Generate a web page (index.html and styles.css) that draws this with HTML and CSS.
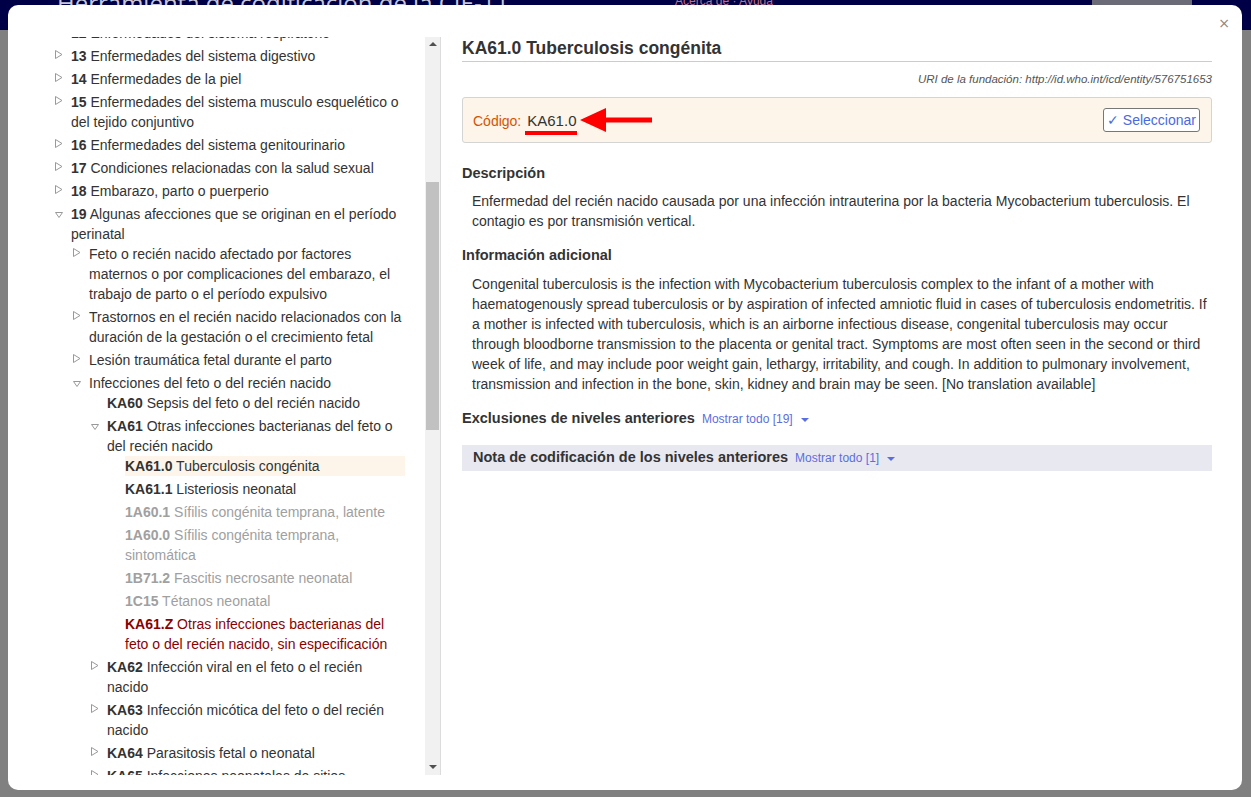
FILE: index.html
```html
<!DOCTYPE html>
<html lang="es">
<head>
<meta charset="utf-8">
<title>Herramienta de codificación de la CIE-11</title>
<link rel="stylesheet" href="styles.css">
</head>
<body>
<header class="topbar">
  <h1 class="app-title">Herramienta de codificación de la CIE-11</h1>
  <span class="top-links">Acerca de · Ayuda</span>
  <span class="top-btn"></span>
</header>

<div class="modal">
  <button class="close" type="button">×</button>
  <div class="modal-body">
    <div class="tree-pane">
      <div class="tree-viewport">
        <ul class="tree">
          <li class="node"><span class="tw"><svg width="8" height="9" viewBox="0 0 8 9"><polygon points="0.5,0.5 7,4.5 0.5,8.5"/></svg></span><div class="nc"><div class="lbl"><b>12</b> Enfermedades del sistema respiratorio</div></div></li>
          <li class="node"><span class="tw"><svg width="8" height="9" viewBox="0 0 8 9"><polygon points="0.5,0.5 7,4.5 0.5,8.5"/></svg></span><div class="nc"><div class="lbl"><b>13</b> Enfermedades del sistema digestivo</div></div></li>
          <li class="node"><span class="tw"><svg width="8" height="9" viewBox="0 0 8 9"><polygon points="0.5,0.5 7,4.5 0.5,8.5"/></svg></span><div class="nc"><div class="lbl"><b>14</b> Enfermedades de la piel</div></div></li>
          <li class="node"><span class="tw"><svg width="8" height="9" viewBox="0 0 8 9"><polygon points="0.5,0.5 7,4.5 0.5,8.5"/></svg></span><div class="nc"><div class="lbl"><b>15</b> Enfermedades del sistema musculo esquelético o del tejido conjuntivo</div></div></li>
          <li class="node"><span class="tw"><svg width="8" height="9" viewBox="0 0 8 9"><polygon points="0.5,0.5 7,4.5 0.5,8.5"/></svg></span><div class="nc"><div class="lbl"><b>16</b> Enfermedades del sistema genitourinario</div></div></li>
          <li class="node"><span class="tw"><svg width="8" height="9" viewBox="0 0 8 9"><polygon points="0.5,0.5 7,4.5 0.5,8.5"/></svg></span><div class="nc"><div class="lbl"><b>17</b> Condiciones relacionadas con la salud sexual</div></div></li>
          <li class="node"><span class="tw"><svg width="8" height="9" viewBox="0 0 8 9"><polygon points="0.5,0.5 7,4.5 0.5,8.5"/></svg></span><div class="nc"><div class="lbl"><b>18</b> Embarazo, parto o puerperio</div></div></li>
          <li class="node open"><span class="tw"><svg width="8" height="6" viewBox="0 0 8 6"><polygon points="0.5,0.5 7.5,0.5 4,5.5"/></svg></span><div class="nc"><div class="lbl"><b>19</b> Algunas afecciones que se originan en el período perinatal</div>
            <ul>
              <li class="node"><span class="tw"><svg width="8" height="9" viewBox="0 0 8 9"><polygon points="0.5,0.5 7,4.5 0.5,8.5"/></svg></span><div class="nc"><div class="lbl">Feto o recién nacido afectado por factores maternos o por complicaciones del embarazo, el trabajo de parto o el período expulsivo</div></div></li>
              <li class="node"><span class="tw"><svg width="8" height="9" viewBox="0 0 8 9"><polygon points="0.5,0.5 7,4.5 0.5,8.5"/></svg></span><div class="nc"><div class="lbl">Trastornos en el recién nacido relacionados con la duración de la gestación o el crecimiento fetal</div></div></li>
              <li class="node"><span class="tw"><svg width="8" height="9" viewBox="0 0 8 9"><polygon points="0.5,0.5 7,4.5 0.5,8.5"/></svg></span><div class="nc"><div class="lbl">Lesión traumática fetal durante el parto</div></div></li>
              <li class="node open"><span class="tw"><svg width="8" height="6" viewBox="0 0 8 6"><polygon points="0.5,0.5 7.5,0.5 4,5.5"/></svg></span><div class="nc"><div class="lbl">Infecciones del feto o del recién nacido</div>
                <ul>
                  <li class="node leaf"><span class="tw"></span><div class="nc"><div class="lbl"><b>KA60</b> Sepsis del feto o del recién nacido</div></div></li>
                  <li class="node open"><span class="tw"><svg width="8" height="6" viewBox="0 0 8 6"><polygon points="0.5,0.5 7.5,0.5 4,5.5"/></svg></span><div class="nc"><div class="lbl"><b>KA61</b> Otras infecciones bacterianas del feto o del recién nacido</div>
                    <ul>
                      <li class="node leaf"><span class="tw"></span><div class="nc"><div class="lbl selected"><b>KA61.0</b> Tuberculosis congénita</div></div></li>
                      <li class="node leaf"><span class="tw"></span><div class="nc"><div class="lbl"><b>KA61.1</b> Listeriosis neonatal</div></div></li>
                      <li class="node leaf muted"><span class="tw"></span><div class="nc"><div class="lbl"><b>1A60.1</b> Sífilis congénita temprana, latente</div></div></li>
                      <li class="node leaf muted"><span class="tw"></span><div class="nc"><div class="lbl"><b>1A60.0</b> Sífilis congénita temprana, sintomática</div></div></li>
                      <li class="node leaf muted"><span class="tw"></span><div class="nc"><div class="lbl"><b>1B71.2</b> Fascitis necrosante neonatal</div></div></li>
                      <li class="node leaf muted"><span class="tw"></span><div class="nc"><div class="lbl"><b>1C15</b> Tétanos neonatal</div></div></li>
                      <li class="node leaf residual"><span class="tw"></span><div class="nc"><div class="lbl"><b>KA61.Z</b> Otras infecciones bacterianas del feto o del recién nacido, sin especificación</div></div></li>
                    </ul>
                  </div></li>
                  <li class="node"><span class="tw"><svg width="8" height="9" viewBox="0 0 8 9"><polygon points="0.5,0.5 7,4.5 0.5,8.5"/></svg></span><div class="nc"><div class="lbl"><b>KA62</b> Infección viral en el feto o el recién nacido</div></div></li>
                  <li class="node"><span class="tw"><svg width="8" height="9" viewBox="0 0 8 9"><polygon points="0.5,0.5 7,4.5 0.5,8.5"/></svg></span><div class="nc"><div class="lbl"><b>KA63</b> Infección micótica del feto o del recién nacido</div></div></li>
                  <li class="node"><span class="tw"><svg width="8" height="9" viewBox="0 0 8 9"><polygon points="0.5,0.5 7,4.5 0.5,8.5"/></svg></span><div class="nc"><div class="lbl"><b>KA64</b> Parasitosis fetal o neonatal</div></div></li>
                  <li class="node"><span class="tw"><svg width="8" height="9" viewBox="0 0 8 9"><polygon points="0.5,0.5 7,4.5 0.5,8.5"/></svg></span><div class="nc"><div class="lbl"><b>KA65</b> Infecciones neonatales de sitios específicos</div></div></li>
                </ul>
              </div></li>
            </ul>
          </div></li>
        </ul>
      </div>
      <div class="scrollbar">
        <span class="sb-arrow sb-up"></span>
        <div class="sb-track"><div class="sb-thumb"></div></div>
        <span class="sb-arrow sb-down"></span>
      </div>
    </div>

    <div class="detail">
      <h2 class="entity-title">KA61.0 Tuberculosis congénita</h2>
      <div class="uri">URI de la fundación: http://id.who.int/icd/entity/576751653</div>
      <div class="code-box">
        <div class="code-line">
          <span class="code-label">Código:</span>
          <span class="code-value">KA61.0
            <svg class="mark-arrow" width="74" height="26" viewBox="0 0 74 26"><polygon points="0,13 26,1 26,10.5 72,10.5 72,15.5 26,15.5 26,25" fill="#f00"/></svg>
          </span>
        </div>
        <button class="select-btn" type="button">✓ Seleccionar</button>
      </div>

      <h3 class="sec-title">Descripción</h3>
      <p class="sec-text">Enfermedad del recién nacido causada por una infección intrauterina por la bacteria Mycobacterium tuberculosis. El contagio es por transmisión vertical.</p>

      <h3 class="sec-title">Información adicional</h3>
      <p class="sec-text sec-text-long">Congenital tuberculosis is the infection with Mycobacterium tuberculosis complex to the infant of a mother with haematogenously spread tuberculosis or by aspiration of infected amniotic fluid in cases of tuberculosis endometritis. If a mother is infected with tuberculosis, which is an airborne infectious disease, congenital tuberculosis may occur through bloodborne transmission to the placenta or genital tract. Symptoms are most often seen in the second or third week of life, and may include poor weight gain, lethargy, irritability, and cough. In addition to pulmonary involvement, transmission and infection in the bone, skin, kidney and brain may be seen. [No translation available]</p>

      <h3 class="sec-title sec-inline">Exclusiones de niveles anteriores <a class="show-all">Mostrar todo [19] <span class="caret"></span></a></h3>

      <h3 class="sec-title sec-band">Nota de codificación de los niveles anteriores <a class="show-all">Mostrar todo [1] <span class="caret"></span></a></h3>
    </div>
  </div>
</div>
</body>
</html>
```

FILE: styles.css
```css
* { box-sizing: border-box; }

html, body {
  margin: 0;
  padding: 0;
}

body {
  width: 1251px;
  height: 797px;
  overflow: hidden;
  background: #808080;
  font-family: "Liberation Sans", Arial, sans-serif;
  font-size: 14px;
  color: #333;
}

/* background app header (dimmed by the modal backdrop) */
.topbar {
  height: 30px;
  background: #000046;
  display: flex;
  align-items: flex-end;
  position: relative;
  overflow: hidden;
}

.app-title {
  margin: 0 0 0 57px;
  font-family: "Open Sans", "Liberation Sans", sans-serif;
  font-weight: 400;
  font-size: 24px;
  line-height: 30px;
  color: #c8c8dc;
  transform: translateY(-12px);
  white-space: nowrap;
}

.top-links {
  margin-left: 166px;
  font-size: 12px;
  color: #c07080;
  transform: translateY(-22px);
}

.top-btn {
  margin-left: auto;
  margin-right: 59px;
  width: 100px;
  height: 30px;
  background: #6b6b78;
}

/* modal window */
.modal {
  position: fixed;
  left: 8px;
  top: 5px;
  width: 1234px;
  height: 785px;
  background: #fff;
  border-radius: 10px;
  padding: 32px 30px 15px 47px;
}

.close {
  position: absolute;
  right: 12px;
  top: 10px;
  border: 0;
  background: none;
  padding: 0;
  font-family: "DejaVu Sans", sans-serif;
  font-size: 14px;
  line-height: 16px;
  color: #888;
}

.modal-body {
  display: flex;
  height: 100%;
}

/* tree pane */
.tree-pane {
  display: flex;
  height: 738px;
  flex: 0 0 386px;
}

.tree-viewport {
  width: 350px;
  margin-right: 20px;
  overflow: hidden;
  height: 100%;
}

.tree, .tree ul {
  list-style: none;
  margin: 0;
  padding: 0;
}

.tree {
  margin-top: -14px;
}

.tree ul {
  padding-left: 2px;
}

.node {
  display: grid;
  grid-template-columns: 16px 1fr;
  line-height: 20px;
}

.node + .node {
  margin-top: 3px;
}

.tw {
  display: block;
  height: 20px;
  padding-top: 4px;
}

.tw svg {
  display: block;
}

.tw polygon {
  fill: none;
  stroke: #999;
  stroke-width: 1;
}

.open > .tw {
  padding-top: 8px;
}

.lbl b {
  font-weight: 700;
}

.lbl.selected {
  background: #fdf5ea;
}

.muted .lbl {
  color: #a0a0a0;
}

.residual .lbl {
  color: #8b0000;
}

/* hand-drawn scrollbar */
.scrollbar {
  width: 16px;
  height: 100%;
  background: #f1f1f1;
  border-right: 1px solid #dcdcdc;
  display: flex;
  flex-direction: column;
  align-items: center;
}

.sb-arrow {
  width: 0;
  height: 0;
  border-left: 4px solid transparent;
  border-right: 4px solid transparent;
}

.sb-up {
  margin-top: 5px;
  border-bottom: 4px solid #505050;
}

.sb-down {
  margin-bottom: 6px;
  border-top: 4px solid #505050;
}

.sb-track {
  flex: 1;
  width: 100%;
  padding: 136px 1px 0 1px;
}

.sb-thumb {
  height: 248px;
  background: #c1c1c1;
}

/* detail pane */
.detail {
  flex: 1;
  padding-left: 21px;
  min-width: 0;
}

.entity-title {
  margin: 0;
  font-size: 17.5px;
  line-height: 22px;
  font-weight: 700;
  color: #333;
  padding-bottom: 2px;
  border-bottom: 1px solid #ccc;
}

.uri {
  margin-top: 10px;
  text-align: right;
  font-style: italic;
  font-size: 11.5px;
  line-height: 14px;
  color: #555;
}

.code-box {
  margin-top: 11px;
  height: 46px;
  background: #fdf5e9;
  border: 1px solid #d4d4d4;
  border-radius: 3px;
  display: flex;
  align-items: center;
  justify-content: space-between;
  padding: 0 11px 0 10px;
}

.code-line {
  display: flex;
  align-items: baseline;
  gap: 6px;
}

.code-label {
  color: #d35400;
  font-size: 14px;
}

.code-value {
  position: relative;
  font-size: 15px;
  color: #333;
}

.code-value::after {
  content: "";
  position: absolute;
  left: -2px;
  right: -1px;
  bottom: -6px;
  height: 4px;
  background: #f00;
}

.mark-arrow {
  position: absolute;
  left: calc(100% + 4px);
  top: -5px;
}

.select-btn {
  height: 24px;
  padding: 0 3px;
  background: #fff;
  border: 1px solid #777;
  border-radius: 3px;
  font-family: "Liberation Sans", Arial, sans-serif;
  font-size: 14px;
  color: #4a6ae0;
}

.sec-title {
  margin: 20px 0 0 0;
  font-size: 14.5px;
  line-height: 20px;
  font-weight: 700;
  color: #333;
}

.sec-text {
  margin: 8px 0 0 0;
  padding-left: 10px;
  line-height: 20px;
}

.sec-text-long {
  margin-top: 9px;
}

.sec-text + .sec-title {
  margin-top: 14px;
}

.sec-band {
  margin-top: 16px;
  background: #e8e8f0;
  line-height: 25px;
  padding-left: 11px;
}

.show-all {
  font-weight: 400;
  font-size: 12px;
  color: #5b6ee1;
  margin-left: 3px;
}

.caret {
  display: inline-block;
  width: 0;
  height: 0;
  margin-left: 5px;
  vertical-align: middle;
  border-left: 4px solid transparent;
  border-right: 4px solid transparent;
  border-top: 4px solid #5b6ee1;
}
```
